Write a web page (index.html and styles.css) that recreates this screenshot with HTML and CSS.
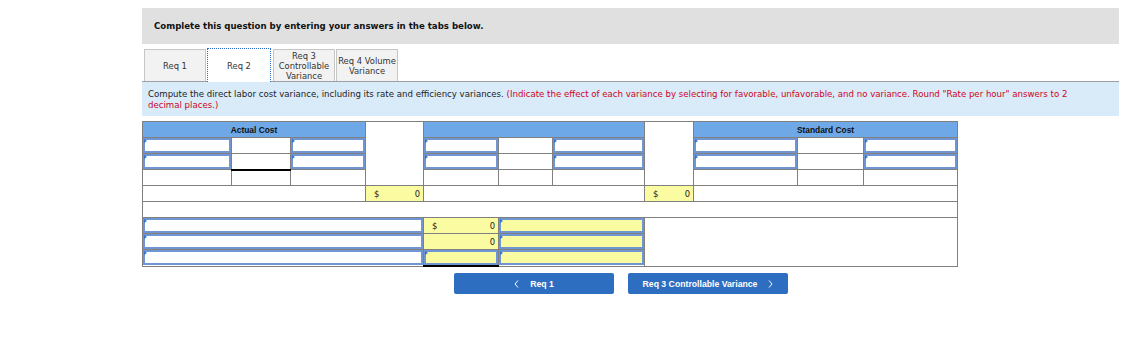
FILE: index.html
```html
<!DOCTYPE html>
<html lang="en">
<head>
    <meta charset="UTF-8">
    <title>Req 2</title>
    <link rel="stylesheet" href="styles.css">
</head>
<body>
    <div class="question">
        <!-- Banner -->
        <div class="banner">Complete this question by entering your answers in the tabs below.</div>

        <!-- Tabs -->
        <div class="tabs">
            <div class="tab">Req 1</div>
            <div class="tab active">Req 2</div>
            <div class="tab">Req 3<br>Controllable<br>Variance</div>
            <div class="tab">Req 4 Volume<br>Variance</div>
        </div>

        <div class="prompt">
            Compute the direct labor cost variance, including its rate and efficiency variances.
            <span class="red">(Indicate the effect of each variance by selecting for favorable, unfavorable, and no variance. Round "Rate per hour" answers to 2 decimal places.)</span>
        </div>

        <!-- Variance grid -->
        <table class="grid">
            <colgroup>
                <col style="width: 89px">
                <col style="width: 59px">
                <col style="width: 75px">
                <col style="width: 58px">
                <col style="width: 75px">
                <col style="width: 54px">
                <col style="width: 92px">
                <col style="width: 49px">
                <col style="width: 104px">
                <col style="width: 66px">
                <col style="width: 94px">
            </colgroup>
            <tr>
                <th colspan="3">Actual Cost</th>
                <td rowspan="4"></td>
                <th colspan="3"></th>
                <td rowspan="4"></td>
                <th colspan="3">Standard Cost</th>
            </tr>
            <tr>
                <td class="inp"><div class="field"></div></td>
                <td></td>
                <td class="inp"><div class="field"></div></td>
                <td class="inp"><div class="field"></div></td>
                <td></td>
                <td class="inp"><div class="field"></div></td>
                <td class="inp"><div class="field"></div></td>
                <td></td>
                <td class="inp"><div class="field"></div></td>
            </tr>
            <tr>
                <td class="inp"><div class="field"></div></td>
                <td class="underline"></td>
                <td class="inp"><div class="field"></div></td>
                <td class="inp"><div class="field"></div></td>
                <td></td>
                <td class="inp"><div class="field"></div></td>
                <td class="inp"><div class="field"></div></td>
                <td></td>
                <td class="inp"><div class="field"></div></td>
            </tr>
            <tr>
                <td></td><td></td><td></td>
                <td></td><td></td><td></td>
                <td></td><td></td><td></td>
            </tr>
            <tr>
                <td colspan="3"></td>
                <td class="total"><span>$</span><span>0</span></td>
                <td colspan="3"></td>
                <td class="total"><span>$</span><span>0</span></td>
                <td colspan="3"></td>
            </tr>
            <tr>
                <td colspan="11"></td>
            </tr>
            <tr>
                <td colspan="4" class="inp"><div class="field"></div></td>
                <td class="total"><span>$</span><span>0</span></td>
                <td colspan="2" class="inp"><div class="field yellow"></div></td>
                <td colspan="4" rowspan="3"></td>
            </tr>
            <tr>
                <td colspan="4" class="inp"><div class="field"></div></td>
                <td class="total"><span></span><span>0</span></td>
                <td colspan="2" class="inp"><div class="field yellow"></div></td>
            </tr>
            <tr>
                <td colspan="4" class="inp"><div class="field"></div></td>
                <td class="inp underline"><div class="field yellow"></div></td>
                <td colspan="2" class="inp"><div class="field yellow"></div></td>
            </tr>
        </table>

        <div class="nav">
            <div class="nav-btn">
                <svg class="chev left" width="5" height="8" viewBox="0 0 5 8"><polyline points="4,0.5 1,4 4,7.5" fill="none" stroke="white" stroke-width="1"/></svg>
                Req 1
            </div>
            <div class="nav-btn">
                Req 3 Controllable Variance
                <svg class="chev right" width="5" height="8" viewBox="0 0 5 8"><polyline points="1,0.5 4,4 1,7.5" fill="none" stroke="white" stroke-width="1"/></svg>
            </div>
        </div>
    </div>
</body>
</html>
```

FILE: styles.css
```css
* {
    margin: 0;
    padding: 0;
    box-sizing: border-box;
}

body {
    font-family: "DejaVu Sans", Verdana, sans-serif;
    font-size: 8.6px;
    color: #222;
    background: white;
}

.question {
    margin-left: 142px;
    width: 977px;
    padding-top: 8px;
}

/* Banner */
.banner {
    background-color: #e0e0e0;
    height: 36px;
    line-height: 36px;
    padding-left: 12px;
    font-weight: bold;
    color: #111;
}

/* Tabs */
.tabs {
    display: flex;
    align-items: flex-end;
    gap: 1px;
    padding-left: 2px;
    height: 37px;
}

.tab {
    width: 62px;
    height: 32px;
    background-color: #f2f2f2;
    border: 1px solid #c6c6c6;
    border-bottom: none;
    display: flex;
    align-items: center;
    justify-content: center;
    text-align: center;
    line-height: 10px;
    color: #333;
    font-size: 8.4px;
}

.tab.active {
    width: 64px;
    height: 34px;
    background-color: white;
    border: 1px dotted #2a6bc4;
    border-bottom: none;
    margin-right: 1px;
    position: relative;
    z-index: 1;
    margin-bottom: -1px;
}

.prompt {
    background-color: #d9ebf9;
    border-top: 1px solid #9aa0a6;
    height: 35px;
    padding: 7px 30px 0 6px;
    line-height: 11px;
    color: #222;
}

.red {
    color: #d0021b;
}

/* Grid */
.grid {
    margin-top: 5px;
    width: 815px;
    table-layout: fixed;
    border-collapse: collapse;
}

.grid th,
.grid td {
    border: 1px solid #808080;
    height: 16px;
    padding: 0;
    font-size: 8px;
}

.grid th {
    background-color: #6fa8e6;
    font-family: "Liberation Sans", Arial, sans-serif;
    font-size: 8.4px;
    font-weight: bold;
    color: #111;
}

.grid td.underline {
    border-bottom: 2px solid #000;
}

.inp {
    position: relative;
}

.field {
    height: 15px;
    border: 2px solid #6f95d2;
    background: white;
}

.field.yellow {
    background-color: #fbfba2;
}

.inp::before {
    content: "";
    position: absolute;
    left: 1px;
    top: 1px;
    border-top: 2px solid transparent;
    border-bottom: 2px solid transparent;
    border-left: 3px solid #2f73d6;
}

.total {
    background-color: #fbfba2;
}

.grid td.total {
    padding: 0 3px 0 8px;
    font-size: 8.4px;
}

.total span:last-child {
    float: right;
}

/* Navigation buttons */
.nav {
    display: flex;
    gap: 14px;
    margin-top: 6px;
    margin-left: 312px;
}

.nav-btn {
    width: 160px;
    height: 21px;
    background-color: #2e6ec0;
    border-radius: 2px;
    color: white;
    font-family: "Liberation Sans", Arial, sans-serif;
    font-weight: bold;
    font-size: 8.7px;
    display: flex;
    align-items: center;
    justify-content: center;
}

.chev.left {
    margin-right: 11px;
}

.chev.right {
    margin-left: 11px;
}
```
